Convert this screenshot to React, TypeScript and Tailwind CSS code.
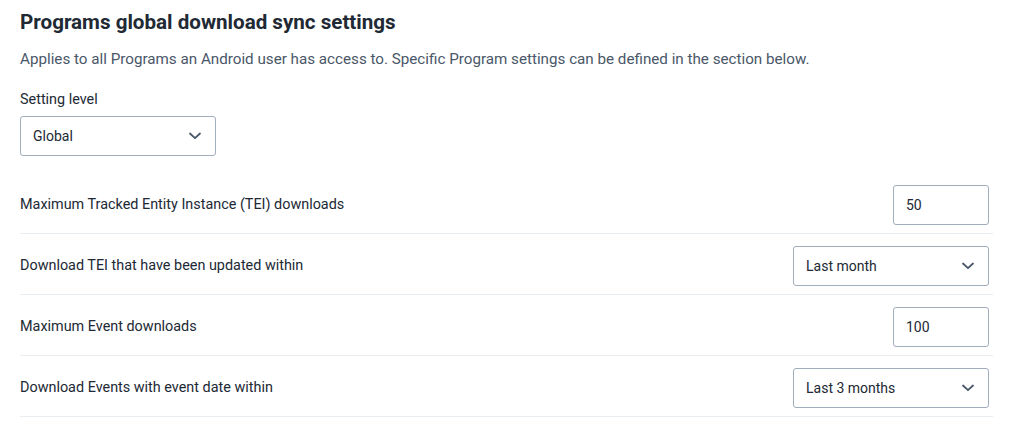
import React from "react";

interface SettingRow {
  label: string;
  kind: "input" | "select";
  value: string;
}

const rows: SettingRow[] = [
  { label: "Maximum Tracked Entity Instance (TEI) downloads", kind: "input", value: "50" },
  { label: "Download TEI that have been updated within", kind: "select", value: "Last month" },
  { label: "Maximum Event downloads", kind: "input", value: "100" },
  { label: "Download Events with event date within", kind: "select", value: "Last 3 months" },
];

function Chevron() {
  return (
    <svg width="14" height="8" viewBox="0 0 14 8" fill="none" className="flex-shrink-0">
      <path d="M2 1.5L7 6.2L12 1.5" stroke="#4a5768" strokeWidth="1.8" strokeLinecap="round" strokeLinejoin="round" />
    </svg>
  );
}

function SelectBox({ value, width }: { value: string; width: string }) {
  return (
    <div
      className={`${width} h-10 flex items-center justify-between pl-3 pr-[13px] border border-[#a0adba] rounded-[3px] bg-white text-sm text-[#212934]`}
    >
      <span>{value}</span>
      <Chevron />
    </div>
  );
}

export default function App() {
  return (
    <main
      className="min-h-screen bg-white px-5 pt-[8px] text-[#212934]"
      style={{ fontFamily: "Roboto, 'Noto Sans', sans-serif" }}
    >
      <div className="w-[973px]">
        <h2 className="text-[20.6px] leading-7 font-bold">Programs global download sync settings</h2>
        <p className="mt-[13px] text-[15.2px] leading-5 text-[#4a5768]">
          Applies to all Programs an Android user has access to. Specific Program settings can be defined in the section below.
        </p>

        <div className="mt-[21px]">
          <label className="block text-[14.4px] leading-5 mb-[6px]">Setting level</label>
          <SelectBox value="Global" width="w-[196px]" />
        </div>

        <div className="mt-[17px]">
          {rows.map((row) => (
            <div
              key={row.label}
              className="flex items-center justify-between pt-3 pb-2 pr-1 border-b border-[#e8edf2]"
            >
              <span className="text-[14.4px] text-[#212934]">{row.label}</span>
              {row.kind === "input" ? (
                <div className="w-[96px] h-10 flex items-center px-3 border border-[#a0adba] rounded-[3px] bg-white text-sm">
                  {row.value}
                </div>
              ) : (
                <SelectBox value={row.value} width="w-[196px]" />
              )}
            </div>
          ))}
        </div>
      </div>
    </main>
  );
}
